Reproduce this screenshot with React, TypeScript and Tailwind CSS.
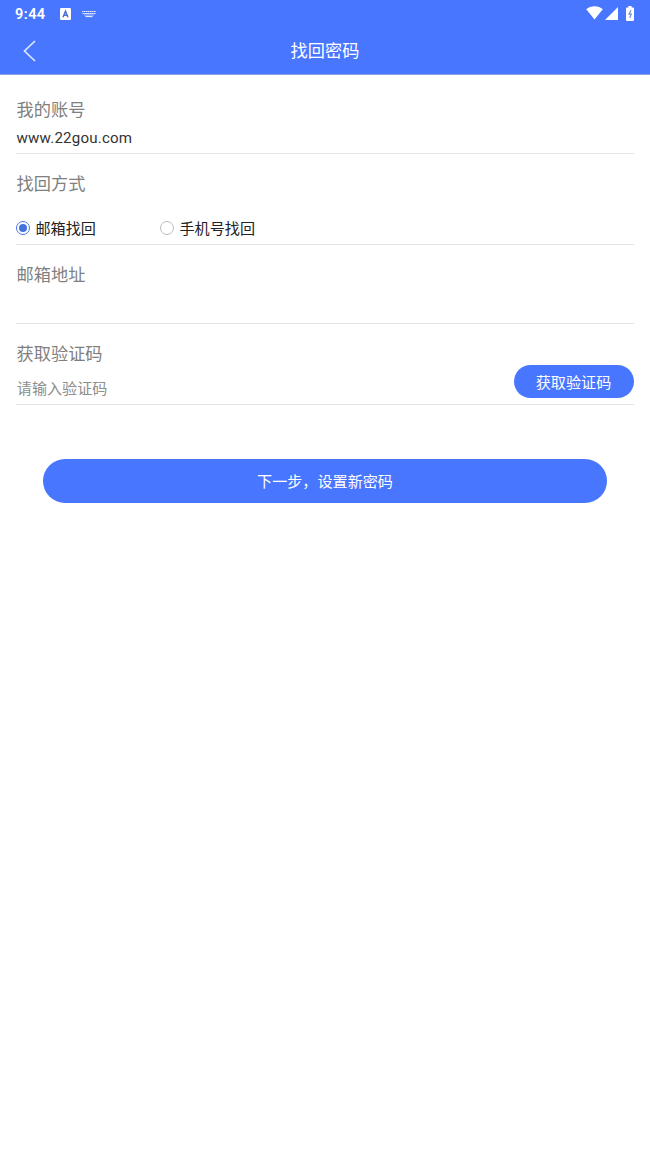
import React, { useState } from 'react'

function StatusBar() {
  return (
    <div className="flex h-[27px] items-center justify-between pl-[15px] pr-4">
      <div className="flex items-center">
        <span className="w-[31px] whitespace-nowrap pt-[3px] font-[Roboto] text-[14.5px] font-semibold leading-none tracking-[0.45px]">
          9:44
        </span>
        <svg className="ml-[14px]" width="11" height="12" viewBox="0 0 11 12">
          <rect width="11" height="12" rx="1.2" fill="#fff" />
          <path d="M3 9.3 5.5 3.2 8 9.3M4 7.2h3" fill="none" stroke="#4a6fd0" strokeWidth="1.4" />
        </svg>
        <svg className="ml-[11px]" width="14" height="8" viewBox="0 0 14 8" stroke="#fff" fill="none">
          <path d="M0 1.5h14" strokeWidth="1.2" strokeDasharray="1.6 .4" opacity="0.85" />
          <path d="M.5 3.5h13" strokeWidth="1.2" strokeDasharray="2 .3" opacity="0.85" />
          <path d="M2 5h10" strokeWidth="1" opacity="0.5" />
          <path d="M3.5 6.5h7" strokeWidth="1.2" opacity="0.85" />
        </svg>
      </div>
      <div className="flex items-center">
        <svg className="mb-px" width="17" height="14" viewBox="0 0 17 14" fill="#fff">
          <path d="M8.5 13.5.2 3.3C2.4 1.3 5.3.2 8.5.2s6.1 1.1 8.3 3.1z" />
        </svg>
        <svg className="ml-[2px]" width="13" height="13" viewBox="0 0 13 13" fill="#fff">
          <path d="M13 0v13H0z" />
        </svg>
        <svg className="mb-px ml-2" width="8" height="15" viewBox="0 0 8 15">
          <path d="M2.4 0h3.2v1.4H7a1 1 0 0 1 1 1V14a1 1 0 0 1-1 1H1a1 1 0 0 1-1-1V2.4a1 1 0 0 1 1-1h1.4z" fill="#fff" />
          <path d="M5 4.200 3 8.200h2.200L3.800 12" fill="none" stroke="#6f8ad8" strokeWidth="1.2" />
        </svg>
      </div>
    </div>
  )
}

interface FieldProps {
  label: string
  className: string
  children?: React.ReactNode
}

function Field({ label, className, children }: FieldProps) {
  return (
    <section className={`border-b border-[#e4e4e4] pt-[18px] ${className}`}>
      <h2 className="pl-[0.6px] text-[17.2px] leading-6 text-[#808080]">{label}</h2>
      {children}
    </section>
  )
}

interface OptionProps {
  label: string
  checked: boolean
  onSelect: () => void
}

function Option({ label, checked, onSelect }: OptionProps) {
  return (
    <label className="flex w-36 items-center text-[15.1px] leading-5 text-[#222]">
      <input type="radio" name="method" className="sr-only" checked={checked} onChange={onSelect} />
      <span
        className={`mr-[5.5px] flex size-[14px] -translate-y-px items-center justify-center rounded-full border ${
          checked ? 'border-[#4a76e0]' : 'border-[#bdbdbd]'
        }`}
      >
        {checked && <span className="size-2 rounded-full bg-[#4471df]" />}
      </span>
      {label}
    </label>
  )
}

export default function App() {
  const [method, setMethod] = useState('email')

  return (
    <div className="min-h-screen bg-white font-[Roboto,'Noto_Sans_CJK_SC',sans-serif]">
      <header className="h-[75px] border-b border-[#8ba0dc] bg-[#4876ff] text-white">
        <StatusBar />
        <div className="grid h-[47px] grid-cols-[1fr_auto_1fr] items-center">
          <button aria-label="返回" className="pl-[23px]">
            <svg width="13" height="22" viewBox="0 0 13 22" fill="none" stroke="#dce8ff" strokeWidth="1.7">
              <path d="M12 1 1.5 11 12 21" />
            </svg>
          </button>
          <h1 className="text-[17.2px] leading-6">找回密码</h1>
        </div>
      </header>

      <main className="px-4 pt-[5px]">
        <Field label="我的账号" className="h-[74px]">
          <p className="mt-[6px] pl-[0.5px] text-[15.1px] leading-5 tracking-[0.2px] text-[#333]">www.22gou.com</p>
        </Field>
        <Field label="找回方式" className="h-[91px]">
          <div className="mt-[23px] flex">
            <Option label="邮箱找回" checked={method === 'email'} onSelect={() => setMethod('email')} />
            <Option label="手机号找回" checked={method === 'phone'} onSelect={() => setMethod('phone')} />
          </div>
        </Field>
        <Field label="邮箱地址" className="h-[79px]" />
        <Field label="获取验证码" className="h-[81px]">
          <div className="flex items-start justify-between">
            <p className="mt-[13px] pl-[0.8px] text-[15.1px] leading-5 text-[#8e8e8e]">请输入验证码</p>
            <button className="-mt-px h-[33px] w-[120px] rounded-full bg-[#4876ff] pr-px pt-[3px] text-[15.1px] text-white">
              获取验证码
            </button>
          </div>
        </Field>
        <div className="px-[27px] pt-[54px]">
          <button className="h-[44px] w-full rounded-full bg-[#4876ff] pt-[2px] text-[15.1px] text-white">
            下一步，设置新密码
          </button>
        </div>
      </main>
    </div>
  )
}
